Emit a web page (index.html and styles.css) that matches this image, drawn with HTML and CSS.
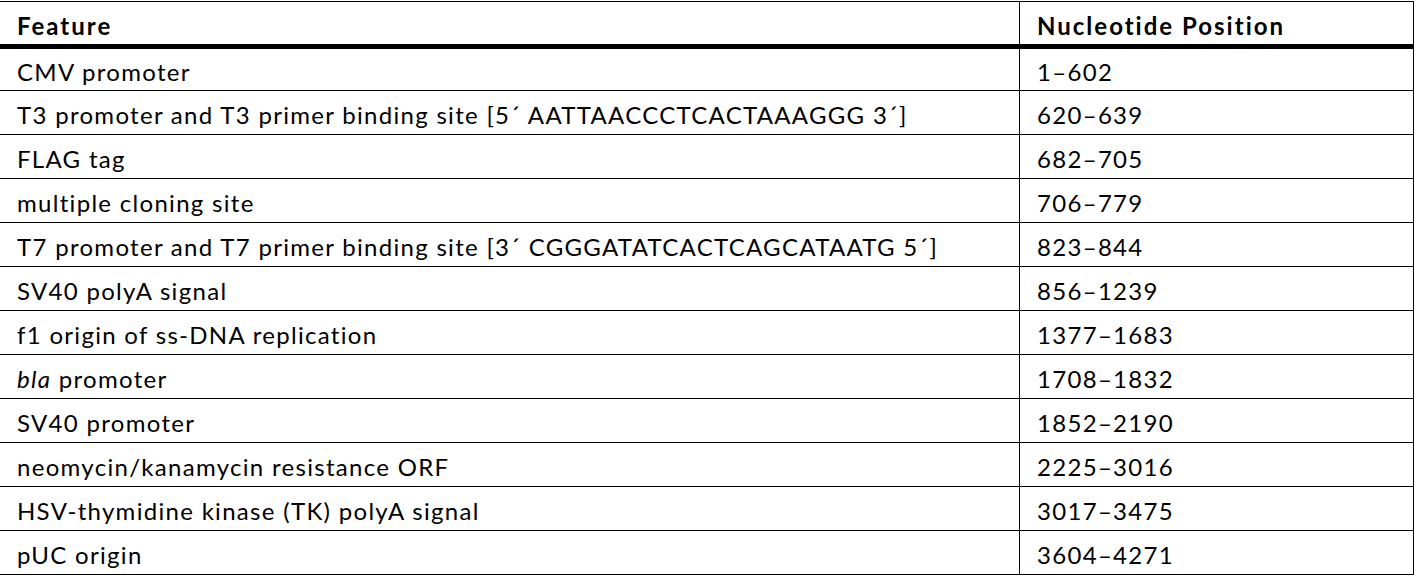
FILE: index.html
```html
<!DOCTYPE html>
<html>
<head>
<meta charset="utf-8">
<link rel="stylesheet" href="styles.css">
</head>
<body>
<table class="features">
  <thead>
    <tr><th class="col-feature">Feature</th><th class="col-pos">Nucleotide Position</th></tr>
  </thead>
  <tbody>
    <tr class="first"><td>CMV promoter</td><td>1–602</td></tr>
    <tr><td>T3 promoter and T3 primer binding site [5´ AATTAACCCTCACTAAAGGG 3´]</td><td>620–639</td></tr>
    <tr><td>FLAG tag</td><td>682–705</td></tr>
    <tr><td>multiple cloning site</td><td>706–779</td></tr>
    <tr><td>T7 promoter and T7 primer binding site [3´ CGGGATATCACTCAGCATAATG 5´]</td><td>823–844</td></tr>
    <tr><td>SV40 polyA signal</td><td>856–1239</td></tr>
    <tr><td>f1 origin of ss-DNA replication</td><td>1377–1683</td></tr>
    <tr><td><i>bla</i> promoter</td><td>1708–1832</td></tr>
    <tr><td>SV40 promoter</td><td>1852–2190</td></tr>
    <tr><td>neomycin/kanamycin resistance ORF</td><td>2225–3016</td></tr>
    <tr><td>HSV-thymidine kinase (TK) polyA signal</td><td>3017–3475</td></tr>
    <tr><td>pUC origin</td><td>3604–4271</td></tr>
  </tbody>
</table>
</body>
</html>
```
FILE: styles.css
```css
html, body {
  margin: 0;
  padding: 0;
  background: #ffffff;
}
body {
  padding-top: 1px;
  font-family: "Lato", "Liberation Sans", sans-serif;
  color: #000;
}
.features {
  border-collapse: collapse;
  width: 1414px;
  table-layout: fixed;
}
.features th,
.features td {
  text-align: left;
  padding: 0 0 0 17px;
  vertical-align: middle;
  white-space: nowrap;
}
.features th {
  font-weight: 700;
  font-size: 24px;
  letter-spacing: 2px;
  height: 38px;
  padding-top: 4px;
  border-top: 1px solid #000;
  border-bottom: 5px solid #000;
}
.features td {
  font-size: 24px;
  font-weight: 400;
  letter-spacing: 1.3px;
  height: 40px;
  padding-top: 3px;
  border-bottom: 1px solid #000;
}
.features .first td {
  height: 38px;
}
.features .col-feature { width: 1002px; }
.features th + th,
.features td + td {
  border-left: 1px solid #000;
  border-right: 1px solid #000;
}
```
